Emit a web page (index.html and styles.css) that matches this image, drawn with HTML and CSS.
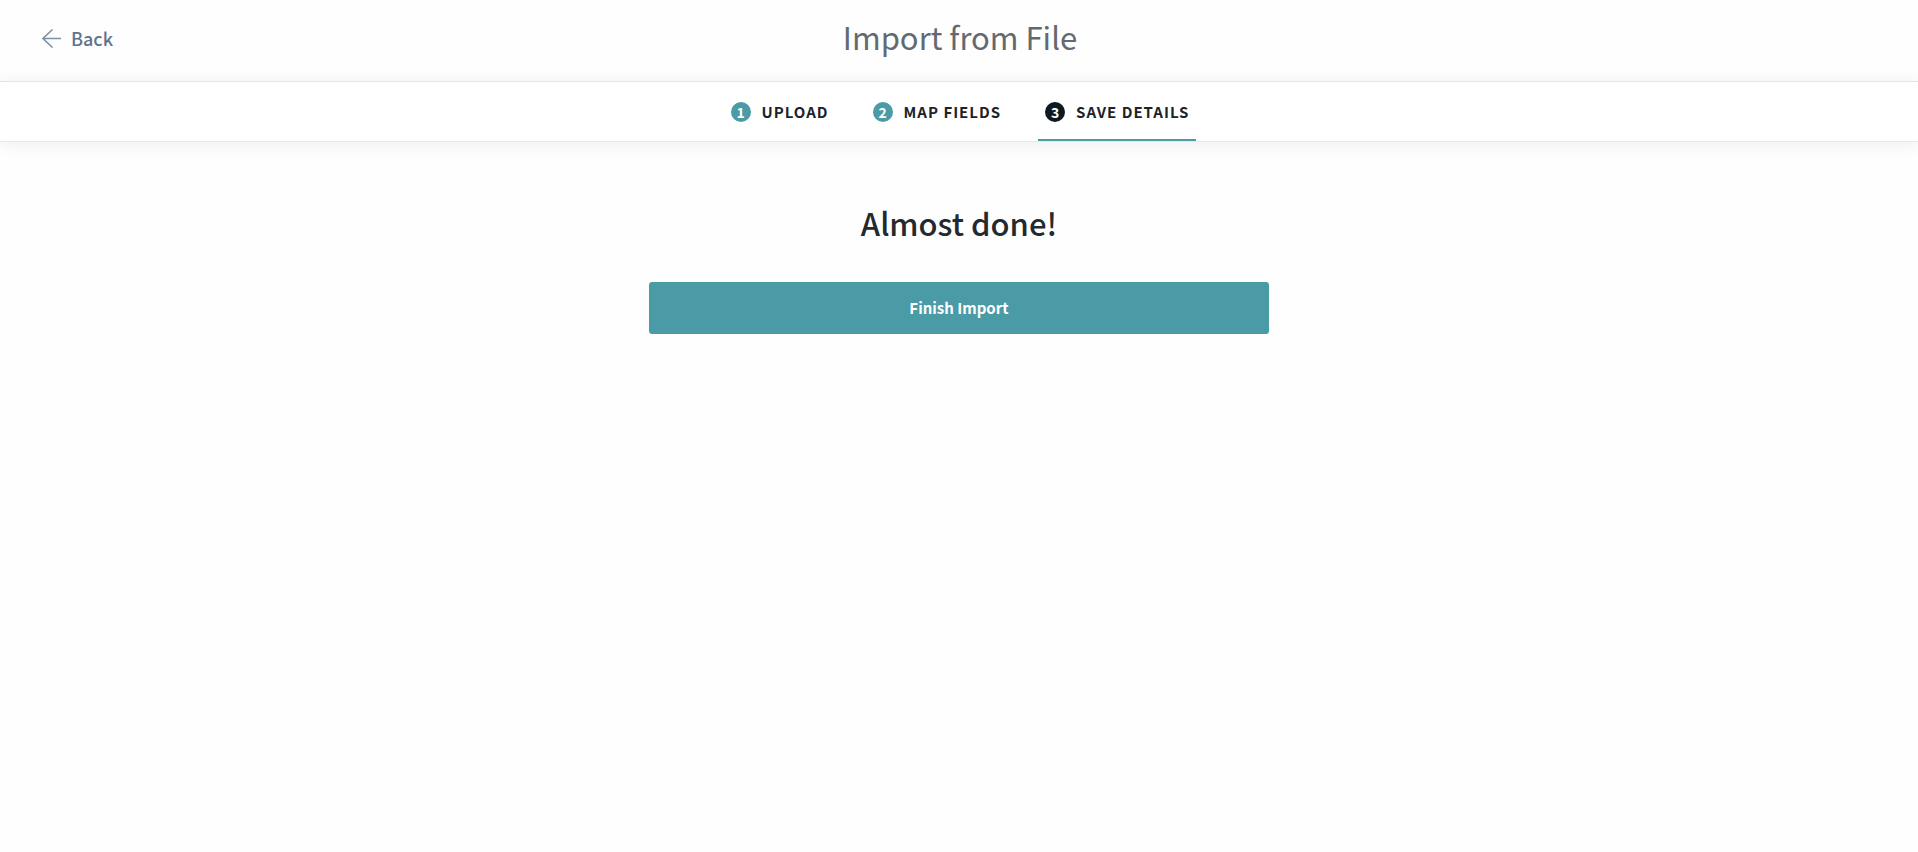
FILE: index.html
```html
<!DOCTYPE html>
<html lang="en">
<head>
  <meta charset="UTF-8">
  <meta name="viewport" content="width=device-width, initial-scale=1.0">
  <title>Import from File</title>
  <link rel="stylesheet" href="styles.css">
</head>
<body>
  <header class="header">
    <a href="#" class="back">
      <svg class="back-icon" width="20" height="20" viewBox="0 0 20 20" fill="none" stroke="currentColor" stroke-width="1.6" aria-hidden="true">
        <path d="M19 10.500H1M10.500 1.500L1 10.500l9.500 9"/>
      </svg>
      <span>Back</span>
    </a>
    <h1 class="title">Import from File</h1>
  </header>

  <nav class="steps">
    <a href="#" class="step"><span class="step-number">1</span>UPLOAD</a>
    <a href="#" class="step"><span class="step-number">2</span>MAP FIELDS</a>
    <a href="#" class="step active" aria-current="step"><span class="step-number">3</span>SAVE DETAILS</a>
  </nav>

  <main class="content">
    <h2 class="heading">Almost done!</h2>
    <button type="button" class="finish">Finish Import</button>
  </main>
</body>
</html>
```
FILE: styles.css
```css
* {
  box-sizing: border-box;
}
body {
  margin: 0;
  font-family: "Noto Sans CJK SC", "Noto Sans", sans-serif;
  font-size: 16px;
  color: #24292e;
  background: #fefefe;
}
.header {
  display: grid;
  grid-template-columns: 1fr auto 1fr;
  align-items: center;
  height: 81px;
  padding: 0 40px 8px 42px;
}
.back {
  display: flex;
  align-items: center;
  justify-self: start;
  gap: 9px;
  padding-top: 2px;
  color: #5f738c;
  font-size: 18px;
  font-weight: 500;
  line-height: 24px;
  text-decoration: none;
}
.back-icon {
  color: #8090a7;
}
.title {
  margin: 0;
  color: #626970;
  font-size: 31px;
  font-weight: 400;
  line-height: 44px;
}
.steps {
  display: flex;
  justify-content: center;
  gap: 30px;
  height: 61px;
  padding-left: 2px;
  background: #fff;
  border-top: 1px solid #e2e4e5;
  border-bottom: 1px solid #e8eaea;
  box-shadow: 0 2px 16px rgba(0, 0, 0, 0.07);
}
.step {
  display: flex;
  align-items: center;
  gap: 11px;
  padding: 2px 7px 0;
  border-bottom: 2px solid transparent;
  color: #1c2328;
  font-size: 15px;
  font-weight: 700;
  letter-spacing: 1px;
  text-decoration: none;
}
.step-number {
  width: 20px;
  height: 20px;
  border-radius: 50%;
  background: #4a9ba6;
  color: #fff;
  font-size: 14px;
  line-height: 20px;
  letter-spacing: 0;
  text-align: center;
}
.step.active {
  border-bottom-color: #4a9ba6;
}
.step.active .step-number {
  background: #0d1a1f;
}
.content {
  display: flex;
  flex-direction: column;
  gap: 35px;
  max-width: 620px;
  margin: 0 auto;
  padding-top: 57px;
}
.heading {
  margin: 0;
  font-size: 31px;
  font-weight: 500;
  line-height: 48px;
  text-align: center;
}
.finish {
  height: 52px;
  padding: 0 6px 2px;
  border: none;
  border-radius: 3px;
  background: #4a9ba6;
  color: #fff;
  font-family: inherit;
  font-size: 15px;
  font-weight: 700;
  cursor: pointer;
}
```
